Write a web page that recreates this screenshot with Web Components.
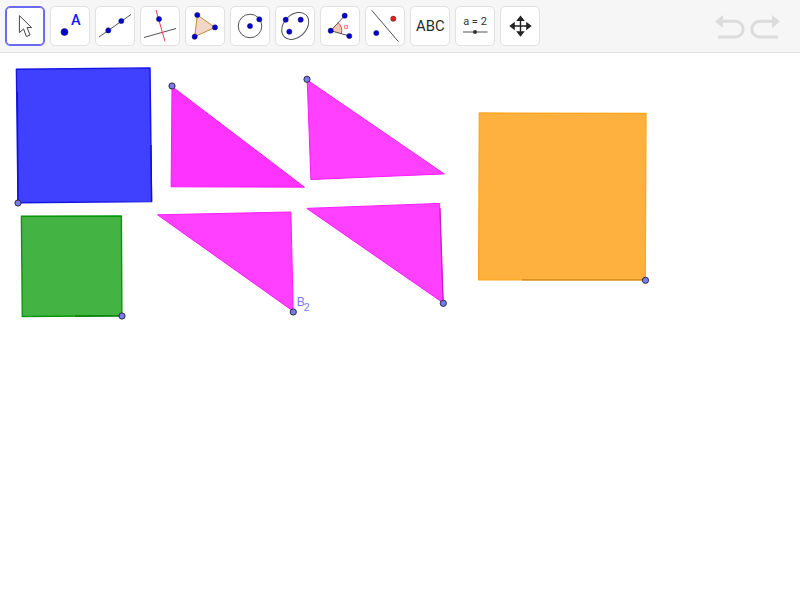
<!DOCTYPE html>
<html>
<head>
<meta charset="utf-8">
<title>Geometry</title>
<style>
html,body{margin:0;padding:0;background:#fff;height:100%;overflow:hidden}
body{font-family:"Liberation Sans",sans-serif}
</style>
</head>
<body>
<gg-app>
  <gg-toolbar slot="bar">
    <gg-tool selected><svg viewBox="6 7 38 38" width="38" height="38"><path d="M19.4 15.6V32.6L23.6 29 26.4 36.6 30 35 27 27.6H31.6Z" fill="#fff" stroke="#444" stroke-width="1"/></svg></gg-tool>
    <gg-tool><svg viewBox="51 7 38 38" width="38" height="38"><circle cx="64.5" cy="32" r="3.5" fill="#0000d0" stroke="#1a1a66" stroke-width=".6"/><text x="75.8" y="25.2" text-anchor="middle" font-family="Roboto,sans-serif" font-size="14.5" font-weight="500" fill="#1414f5">A</text></svg></gg-tool>
    <gg-tool><svg viewBox="96 7 38 38" width="38" height="38"><path d="M99 37L131 14.5" stroke="#555" stroke-width="1" fill="none"/><circle cx="108.3" cy="30.4" r="2.6" fill="#0000d0" stroke="#1a1a66" stroke-width=".5"/><circle cx="121.3" cy="21" r="2.6" fill="#0000d0" stroke="#1a1a66" stroke-width=".5"/></svg></gg-tool>
    <gg-tool><svg viewBox="141 7 38 38" width="38" height="38"><path d="M144 37.5L176 28.5" stroke="#555" stroke-width="1" fill="none"/><path d="M156 10L165 41.5" stroke="#f04050" stroke-width="1" fill="none"/><circle cx="159" cy="19" r="2.6" fill="#0000d0" stroke="#1a1a66" stroke-width=".5"/></svg></gg-tool>
    <gg-tool><svg viewBox="186 7 38 38" width="38" height="38"><path d="M197.3 15L215 27.4 194.7 36.7Z" fill="#f2d6c8" stroke="#c48a3c" stroke-width="1"/><circle cx="197.3" cy="15" r="2.6" fill="#0000d0" stroke="#1a1a66" stroke-width=".5"/><circle cx="215" cy="27.4" r="2.6" fill="#0000d0" stroke="#1a1a66" stroke-width=".5"/><circle cx="194.7" cy="36.7" r="2.6" fill="#0000d0" stroke="#1a1a66" stroke-width=".5"/></svg></gg-tool>
    <gg-tool><svg viewBox="231 7 38 38" width="38" height="38"><circle cx="250" cy="26" r="11.8" fill="none" stroke="#555" stroke-width="1"/><circle cx="250" cy="26" r="2.6" fill="#0000d0" stroke="#1a1a66" stroke-width=".5"/><circle cx="259.3" cy="19.3" r="2.6" fill="#0000d0" stroke="#1a1a66" stroke-width=".5"/></svg></gg-tool>
    <gg-tool><svg viewBox="276 7 38 38" width="38" height="38"><ellipse cx="295.2" cy="25.9" rx="15.4" ry="11.2" transform="rotate(-45 295.2 25.9)" fill="none" stroke="#555" stroke-width="1"/><circle cx="285.7" cy="19.7" r="2.6" fill="#0000d0" stroke="#1a1a66" stroke-width=".5"/><circle cx="300.7" cy="19.7" r="2.6" fill="#0000d0" stroke="#1a1a66" stroke-width=".5"/><circle cx="289.3" cy="31.7" r="2.6" fill="#0000d0" stroke="#1a1a66" stroke-width=".5"/></svg></gg-tool>
    <gg-tool><svg viewBox="321 7 38 38" width="38" height="38"><path d="M330.7 30.7L338.2 22.7A11 11 0 0 1 341.3 33.7Z" fill="#f5c6b4"/><path d="M338.2 22.7A11 11 0 0 1 341.3 33.7" fill="none" stroke="#f04050" stroke-width="1"/><path d="M344.7 15.7L330.7 30.7 349.3 36" fill="none" stroke="#555" stroke-width="1"/><circle cx="330.7" cy="30.7" r="2.6" fill="#0000d0" stroke="#1a1a66" stroke-width=".5"/><circle cx="344.7" cy="15.7" r="2.6" fill="#0000d0" stroke="#1a1a66" stroke-width=".5"/><circle cx="349.3" cy="36" r="2.6" fill="#0000d0" stroke="#1a1a66" stroke-width=".5"/><text x="346" y="28.6" text-anchor="middle" font-family="'Liberation Sans',sans-serif" font-size="8" fill="#f04050">α</text></svg></gg-tool>
    <gg-tool><svg viewBox="366 7 38 38" width="38" height="38"><path d="M371.7 10.3L398.5 41.7" stroke="#555" stroke-width="1" fill="none"/><circle cx="393.3" cy="18.7" r="2.6" fill="#e02020" stroke="#661a1a" stroke-width=".5"/><circle cx="376.3" cy="33" r="2.6" fill="#0000d0" stroke="#1a1a66" stroke-width=".5"/></svg></gg-tool>
    <gg-tool><svg viewBox="411 7 38 38" width="38" height="38"><text x="430.3" y="31" text-anchor="middle" font-family="Roboto,sans-serif" font-size="14.8" fill="#2a2a2a">ABC</text></svg></gg-tool>
    <gg-tool><svg viewBox="456 7 38 38" width="38" height="38"><text x="475" y="25" text-anchor="middle" font-family="Roboto,sans-serif" font-size="11" fill="#333">a = 2</text><path d="M463 32H487.5" stroke="#555" stroke-width="1"/><circle cx="475" cy="32" r="2" fill="#333"/></svg></gg-tool>
    <gg-tool><svg viewBox="501 7 38 38" width="38" height="38"><path d="M520.5 18V34M512.5 26H528.5" stroke="#222" stroke-width="1.4" fill="none"/><path d="M520.5 15.5L524.8 21H516.2ZM520.5 36.7L524.8 31.2H516.2ZM509.3 26L514.8 21.7V30.3ZM531.7 26L526.2 21.7V30.3Z" fill="#222"/></svg></gg-tool>
    <gg-history></gg-history>
  </gg-toolbar>
  <gg-board></gg-board>
</gg-app>
<script>
class GgApp extends HTMLElement{
  constructor(){super();this.attachShadow({mode:'open'}).innerHTML=`<style>:host{display:flex;flex-direction:column;width:800px;height:600px;background:#fff}</style><slot name="bar"></slot><slot></slot>`;}
}
class GgToolbar extends HTMLElement{
  constructor(){super();this.attachShadow({mode:'open'}).innerHTML=`<style>:host{display:flex;align-items:flex-start;gap:5px;box-sizing:border-box;height:53px;padding:6px 10px 0 5px;background:#f6f6f6;border-bottom:1px solid #e1e1e1;flex:none}</style><slot></slot>`;}
}
class GgTool extends HTMLElement{
  constructor(){super();this.attachShadow({mode:'open'}).innerHTML=`<style>
  :host{display:block;box-sizing:border-box;width:40px;height:40px;border:1px solid #e1e1e1;border-radius:5px;background:#fff;flex:none}
  :host([selected]){border-color:#6a6af5;box-shadow:inset 0 0 0 1px #6a6af5}
  ::slotted(svg){display:block;overflow:visible}
  </style><slot></slot>`;}
}
class GgHistory extends HTMLElement{
  constructor(){super();this.attachShadow({mode:'open'}).innerHTML=`<style>
  :host{display:flex;margin-left:auto;flex:none}
  svg{display:block}
  </style>
  <svg viewBox="710 6 40 40" width="40" height="40"><path d="M722 21.3H734.5C746 21.3 746 37 734.5 37H718" fill="none" stroke="#dcdcdc" stroke-width="3"/><path d="M715 21.5L723 15V28Z" fill="#dcdcdc"/></svg>
  <svg viewBox="750 6 40 40" width="40" height="40"><path d="M773 21.3H760.5C749 21.3 749 37 760.5 37H778" fill="none" stroke="#dcdcdc" stroke-width="3"/><path d="M780 21.5L772 15V28Z" fill="#dcdcdc"/></svg>`;}
}
const shapes=[
 ['16.4,69.3 150,67.9 151.6,201.6 18,202.8','#4040ff','#1414e6',1.4],
 ['21.4,216.3 121.4,216 121.9,315.8 22.3,316.5','#43b343','#0a960a',1.4],
 ['172,86.5 171.1,186.8 304.5,187.2','#ff33ff','#ff1aff',1],
 ['157.5,214.8 290.9,212 293.2,311.2','#ff40ff','#ff1aff',1],
 ['307.2,80 310.9,179.5 444.3,173.9','#ff40ff','#ff1aff',1],
 ['306.8,208.4 439.6,203.4 443.1,302.8','#ff40ff','#ff1aff',1],
 ['479.3,113 646,113.5 645.3,279.8 478.6,279.8','#ffb13f','#ffa51f',1.3]
];
const accents=[
 ['17.5,92 18,202.8','#1010d8'],['151,145 151.6,201.6','#1010d8'],
 ['75,316.2 121.9,315.8','#057a05'],
 ['440,208 443.1,302.8','#c81ec8'],
 ['522,279.8 645.3,279.8','#cc8a14']
];
const pts=[[18,203],[122,316],[172,86],[293.3,312],[307,79.3],[443.3,303.3],[645.5,280.3]];
class GgBoard extends HTMLElement{
  constructor(){super();
    const p=shapes.map(s=>`<polygon points="${s[0]}" fill="${s[1]}" stroke="${s[2]}" stroke-width="${s[3]}" stroke-linejoin="round"/>`).join('');
    const a=accents.map(s=>`<polyline points="${s[0]}" fill="none" stroke="${s[1]}" stroke-width="1.2"/>`).join('');
    const c=pts.map(q=>`<circle cx="${q[0]}" cy="${q[1]}" r="3.1" fill="#7a7aef" stroke="#2a2a40" stroke-width="1"/>`).join('');
    this.attachShadow({mode:'open'}).innerHTML=`<style>
    :host{display:block;flex:1;min-height:0;background:#fff}
    svg{display:block}
    text{font-family:"Liberation Sans",sans-serif;fill:#7a7aff}
    </style>
    <svg viewBox="0 53 800 547" width="800" height="547">${p}${a}${c}
      <text x="296.8" y="306" font-size="12">B</text><text x="303.8" y="311" font-size="10.5">2</text>
    </svg>`;}
}
customElements.define('gg-app',GgApp);
customElements.define('gg-toolbar',GgToolbar);
customElements.define('gg-tool',GgTool);
customElements.define('gg-history',GgHistory);
customElements.define('gg-board',GgBoard);
</script>
</body>
</html>
